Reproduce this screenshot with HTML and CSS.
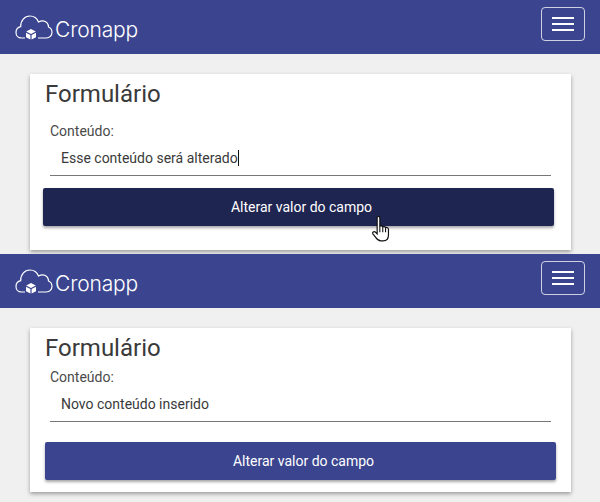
FILE: index.html
```html
<!DOCTYPE html>
<html lang="pt">
<head>
<meta charset="utf-8">
<title>Formulário</title>
<link rel="stylesheet" href="styles.css">
</head>
<body>
<section class="screen screen-a">
  <header class="navbar">
    <div class="brand">
      <svg class="logo" width="40" height="28" viewBox="0 0 40 28"><path d="M10 24H6.500C3 24 1 21.300 1 18.500C1 15.500 3 13.300 5.700 12.700C5.500 6.500 9.500 2 15 2C19 2 22 4.300 23.500 8C25 7.200 26.500 6.700 28 6.800C31.500 7 33.500 10 33.500 13C35.800 14 37 16 37 18.300C37 21.700 34.500 24 31.500 24H23" fill="none" stroke="#fff" stroke-width="1.200"/><path d="M16 15L20.800 17.500L16 20L11.200 17.500Z M11 18.700L15.400 21V25.500L11 23.200Z M21 18.700L16.600 21V25.500L21 23.200Z" fill="#fff"/></svg>
      <span class="brand-name">Cronapp</span>
    </div>
    <button class="toggler"><span></span><span></span><span></span></button>
  </header>
  <main class="content">
    <div class="card">
      <h1>Formulário</h1>
      <label>Conteúdo:</label>
      <div class="field"><span>Esse conteúdo será alterado</span><i class="caret"></i></div>
      <button class="action dark">Alterar valor do campo</button>
    </div>
  </main>
  <svg class="cursor" width="22" height="28" viewBox="0 0 20 26"><path d="M5.500 2.500C5.500 0.800 8 0.800 8 2.500V10.500C9.200 10 10.300 10.200 10.700 11C11.800 10.500 12.800 10.800 13.300 11.700C14.500 11.300 16 11.800 16 13.500V18.500C16 21.800 14.300 24 11 24H9C6.500 24 5.500 22.800 4.300 21L1.500 17.500C0.700 16.300 2.300 14.700 3.800 15.800L5.500 17.500Z" fill="#fff" stroke="#111" stroke-width="1.100"/><path d="M8 11V16M10.700 11V16M13.300 12V16" stroke="#111" stroke-width="1" fill="none"/></svg>
</section>
<section class="screen screen-b">
  <header class="navbar">
    <div class="brand">
      <svg class="logo" width="40" height="28" viewBox="0 0 40 28"><path d="M10 24H6.500C3 24 1 21.300 1 18.500C1 15.500 3 13.300 5.700 12.700C5.500 6.500 9.500 2 15 2C19 2 22 4.300 23.500 8C25 7.200 26.500 6.700 28 6.800C31.500 7 33.500 10 33.500 13C35.800 14 37 16 37 18.300C37 21.700 34.500 24 31.500 24H23" fill="none" stroke="#fff" stroke-width="1.200"/><path d="M16 15L20.800 17.500L16 20L11.200 17.500Z M11 18.700L15.400 21V25.500L11 23.200Z M21 18.700L16.600 21V25.500L21 23.200Z" fill="#fff"/></svg>
      <span class="brand-name">Cronapp</span>
    </div>
    <button class="toggler"><span></span><span></span><span></span></button>
  </header>
  <main class="content">
    <div class="card">
      <h1>Formulário</h1>
      <label>Conteúdo:</label>
      <div class="field"><span>Novo conteúdo inserido</span></div>
      <button class="action">Alterar valor do campo</button>
    </div>
  </main>
</section>
</body>
</html>
```
FILE: styles.css
```css
* { box-sizing: border-box; }
html, body { margin: 0; padding: 0; }
body { width: 600px; height: 502px; overflow: hidden; background: #f0f0f0; font-family: Roboto, "Liberation Sans", sans-serif; color: #333; }
.screen { position: relative; height: 254px; }
.screen-b { height: 248px; }
.navbar { height: 54px; background: #3b458f; display: flex; align-items: flex-start; justify-content: space-between; padding: 7px 15px 0; }
.brand { display: flex; align-items: center; margin-top: 5px; }
.logo { display: block; }
.brand-name { font-family: Inter, "Open Sans", sans-serif; font-weight: 300; font-size: 21px; line-height: 28px; letter-spacing: -0.15px; color: #fff; margin: 4px 0 0; }
.toggler { width: 44px; height: 34px; padding: 0; background: transparent; border: 1px solid rgba(255,255,255,0.75); border-radius: 4px; display: flex; flex-direction: column; align-items: center; justify-content: center; gap: 4px; }
.toggler span { width: 22px; height: 2px; background: #fff; display: block; }
.content { padding: 20px 30px 0; }
.card { height: 176px; width: 541px; background: #fff; box-shadow: 0 2px 4px rgba(0,0,0,.35); padding: 6px 15px 0; }
h1 { margin: 0; font-size: 24px; line-height: 28px; font-weight: 400; color: #3a3a3a; }
label { display: block; margin: 14px 0 0 5px; font-size: 14px; line-height: 18px; color: #4a4a4a; }
.field { margin: 4px 5px 0; width: 501px; height: 32px; border-bottom: 1px solid #777; padding: 4px 11px 0; font-size: 14px; line-height: 20px; color: #3a3a3a; }
.caret { display: inline-block; width: 1px; height: 16px; background: #111; vertical-align: -3px; }
.action { display: block; width: 511px; height: 38px; padding: 0 0 0 6px; border: 0; border-radius: 2px; color: #fff; background: #3b458f; font: 14px Roboto, sans-serif; box-shadow: 0 2px 3px rgba(0,0,0,.35); margin-top: 20px; }
.action.dark { background: #1f2551; margin: 12px 0 0 -2px; }
.screen-b .card { height: 164px; }
.screen-b label { margin-top: 6px; }
.screen-b .field { margin-top: 5px; padding-top: 3px; height: 31px; }
.cursor { position: absolute; left: 371px; top: 215px; }
```
